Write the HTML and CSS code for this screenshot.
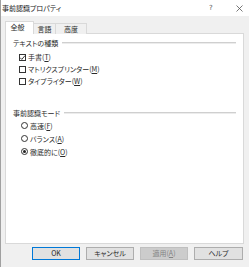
FILE: index.html
```html
<!DOCTYPE html>
<html lang="ja">
<head>
<meta charset="utf-8">
<link rel="stylesheet" href="styles.css">
</head>
<body>
<div class="window">
  <div class="titlebar">
    <span class="title">事前認識プロパティ</span>
    <span class="tb-help">?</span>
    <span class="tb-close"><svg width="7" height="7" viewBox="0 0 7 7"><path d="M0.5 0.5L6.5 6.5M6.5 0.5L0.5 6.5" stroke="#555" stroke-width="0.8" fill="none"/></svg></span>
  </div>
  <div class="client">
    <div class="tabs">
      <div class="tab active">全般</div>
      <div class="tab t2">言語</div>
      <div class="tab t3">高度</div>
    </div>
    <div class="panel">
      <div class="group-head g1"><span>テキストの種類</span><span class="rule"></span></div>
      <div class="opts checks">
        <div class="opt"><span class="box"><svg width="7" height="7" viewBox="0 0 7 7"><path d="M1 3.6L2.8 5.4L6 1.6" stroke="#222" stroke-width="0.9" fill="none"/></svg></span><span class="lbl">手書(<u>T</u>)</span></div>
        <div class="opt"><span class="box"></span><span class="lbl">マトリクスプリンター(<u>M</u>)</span></div>
        <div class="opt"><span class="box"></span><span class="lbl">タイプライター(<u>W</u>)</span></div>
      </div>
      <div class="group-head g2"><span>事前認識モード</span><span class="rule"></span></div>
      <div class="opts radios">
        <div class="opt"><span class="radio"></span><span class="lbl">高速(<u>F</u>)</span></div>
        <div class="opt"><span class="radio"></span><span class="lbl">バランス(<u>A</u>)</span></div>
        <div class="opt"><span class="radio on"></span><span class="lbl">徹底的に(<u>O</u>)</span></div>
      </div>
    </div>
    <div class="buttons">
      <div class="btn default">OK</div>
      <div class="btn">キャンセル</div>
      <div class="btn disabled">適用(<u>A</u>)</div>
      <div class="btn">ヘルプ</div>
    </div>
  </div>
</div>
</body>
</html>
```

FILE: styles.css
```css
* { box-sizing: border-box; }
html, body { margin: 0; padding: 0; }
body {
  width: 249px;
  height: 267px;
  overflow: hidden;
  font-family: "Noto Sans CJK JP", "Noto Sans", sans-serif;
  font-size: 7px;
  font-feature-settings: "palt";
  color: #2a2a2a;
  background: #f0f0f0;
}
u { text-decoration: underline; text-decoration-thickness: 0.5px; text-underline-offset: 1px; }
.window {
  width: 249px;
  height: 267px;
  display: flex;
  flex-direction: column;
  border-left: 1px solid #a0a0a0;
}
.titlebar {
  height: 16px;
  background: #fff;
  display: flex;
  align-items: center;
  padding-left: 1px;
  line-height: 8px;
}
.title { flex: 1; color: #222; }
.tb-help { width: 8px; color: #555; font-family: "DejaVu Sans", sans-serif; font-size: 7px; margin-right: 19px; }
.tb-close { width: 13px; display: flex; align-items: center; }
.client {
  flex: 1;
  padding: 5px 0 0 4px;
  display: flex;
  flex-direction: column;
}
.tabs {
  display: flex;
  align-items: flex-end;
  height: 13px;
  margin-bottom: -1px;
  position: relative;
  z-index: 1;
}
.tab {
  height: 11px;
  line-height: 10px;
  text-align: center;
  border: 1px solid #d9d9d9;
  border-bottom: none;
  background: #f0f0f0;
  color: #2a2a2a;
}
.tab.active {
  height: 13px;
  width: 29px;
  background: #fff;
  border-color: #d9d9d9;
  line-height: 11px;
  padding-right: 4px;
}
.tab.t2 { width: 22px; border-left: none; }
.tab.t3 { width: 31px; border-left: none; }
.panel {
  width: 239px;
  height: 211px;
  background: #fff;
  border: 1px solid #d9d9d9;
  padding: 5px 7px 0 7px;
}
.group-head {
  display: flex;
  align-items: center;
  height: 8px;
  line-height: 8px;
}
.group-head .rule {
  flex: 1;
  margin-left: 4px;
  height: 2px;
  border-top: 1px solid #cfcfcf;
  border-bottom: 1px solid #ececec;
}
.g2 { margin-top: 22px; }
.opts { padding-left: 6px; }
.checks { margin-top: 4px; }
.radios { margin-top: 2px; }
.checks .opt { height: 12px; }
.radios .opt { height: 13px; }
.opt {
  display: flex;
  align-items: center;
  line-height: 8px;
}
.box {
  width: 7px;
  height: 7px;
  border: 1px solid #333;
  background: #fff;
  margin-right: 2px;
  display: flex;
  align-items: center;
  justify-content: center;
}
.box svg { margin: -1px; }
.radio {
  width: 7px;
  height: 7px;
  border: 1px solid #333;
  border-radius: 50%;
  margin-left: 2px;
  margin-right: 2px;
  display: flex;
  align-items: center;
  justify-content: center;
}
.radio.on::after {
  content: "";
  width: 3px;
  height: 3px;
  border-radius: 50%;
  background: #222;
}
.buttons {
  display: grid;
  grid-template-columns: 48px 48px 48px 49px;
  column-gap: 6px;
  margin-top: 3px;
  margin-left: 27px;
}
.btn {
  height: 13px;
  line-height: 11px;
  text-align: center;
  background: #e1e1e1;
  border: 1px solid #adadad;
}
.btn.default { border-color: #0078d7; }
.btn.disabled { background: #cccccc; border-color: #bfbfbf; color: #838383; }
```
